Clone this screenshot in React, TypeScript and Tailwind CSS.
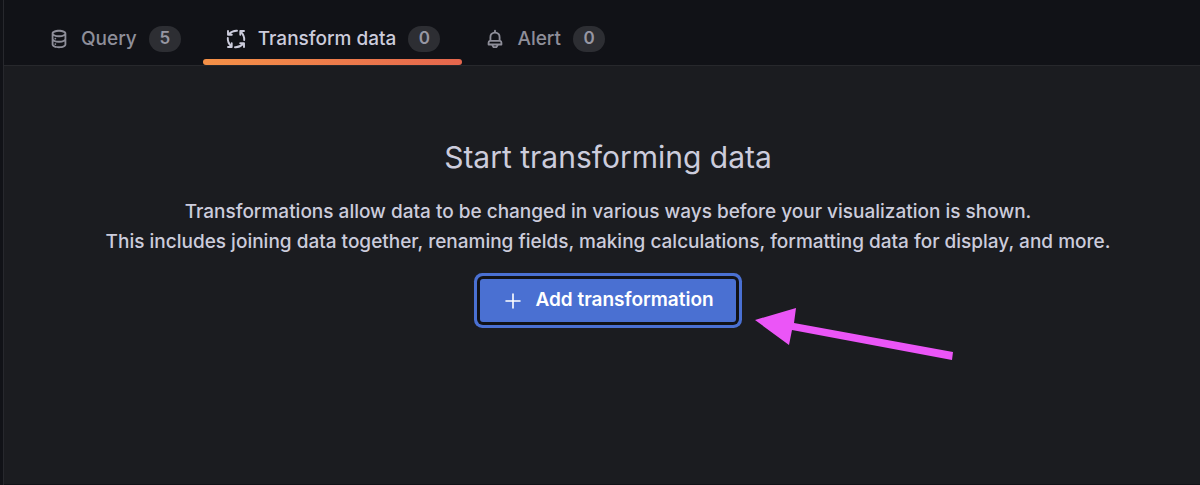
import type { ReactNode } from "react";

function DatabaseIcon() {
  return (
    <svg className="size-[22px] shrink-0" viewBox="0 0 24 24" fill="currentColor" aria-hidden="true">
      <path d="M8,16.5a1,1,0,1,0,1,1A1,1,0,0,0,8,16.5ZM12,2C8,2,4,3.37,4,6V18c0,2.63,4,4,8,4s8-1.37,8-4V6C20,3.37,16,2,12,2Zm6,16c0,.71-2.28,2-6,2s-6-1.29-6-2V14.73A13.16,13.16,0,0,0,12,16a13.16,13.16,0,0,0,6-1.27Zm0-6c0,.71-2.28,2-6,2s-6-1.29-6-2V8.73A13.16,13.16,0,0,0,12,10a13.16,13.16,0,0,0,6-1.27ZM12,8C8.28,8,6,6.71,6,6s2.28-2,6-2,6,1.29,6,2S15.72,8,12,8ZM8,10.5a1,1,0,1,0,1,1A1,1,0,0,0,8,10.5Z" />
    </svg>
  );
}

function ProcessIcon() {
  return (
    <svg
      className="size-[22px] shrink-0"
      viewBox="0 0 22 22"
      fill="none"
      stroke="currentColor"
      strokeWidth="1.9"
      strokeLinecap="round"
      strokeLinejoin="round"
      aria-hidden="true"
    >
      <path d="M12 2.8C9 2.6 6.4 3.6 4 6" />
      <path d="M3 3V6.7H6.8" />
      <path d="M19.2 12C19.4 9 18.4 6.4 16 4" />
      <path d="M19 3H15.3V6.8" />
      <path d="M10 19.2C13 19.4 15.6 18.4 18 16" />
      <path d="M19 19V15.3H15.2" />
      <path d="M2.8 10C2.6 13 3.6 15.6 6 18" />
      <path d="M3 19H6.7V15.2" />
    </svg>
  );
}

function BellIcon() {
  return (
    <svg className="size-[22px] shrink-0" viewBox="0 0 24 24" fill="currentColor" aria-hidden="true">
      <path d="M18,13.18V10a6,6,0,0,0-5-5.91V3a1,1,0,0,0-2,0V4.09A6,6,0,0,0,6,10v3.18A3,3,0,0,0,4,16v2a1,1,0,0,0,1,1H8.14a4,4,0,0,0,7.72,0H19a1,1,0,0,0,1-1V16A3,3,0,0,0,18,13.18ZM8,10a4,4,0,0,1,8,0v3H8Zm4,10a2,2,0,0,1-1.72-1h3.44A2,2,0,0,1,12,20Zm6-3H6V16a1,1,0,0,1,1-1H17a1,1,0,0,1,1,1Z" />
    </svg>
  );
}

function Tab({ icon, label, count, active = false }: { icon: ReactNode; label: string; count: number; active?: boolean }) {
  return (
    <button
      type="button"
      role="tab"
      aria-selected={active}
      className={
        active
          ? "flex flex-col justify-end text-[#ccccdc]"
          : "flex flex-col justify-end text-[#8e8e99]"
      }
    >
      <span className="flex items-center px-[22px] pb-[7px]">
        {icon}
        <span className="ml-[11px] text-[19px] leading-[26px] font-medium whitespace-nowrap">{label}</span>
        <span className="ml-3 flex h-[26px] w-8 items-center justify-center rounded-full bg-[#2d2e33] text-[17px] font-semibold text-[#9797a3]">
          {count}
        </span>
      </span>
      <span
        className={
          active
            ? "h-1.5 w-full rounded-[3px] bg-linear-to-r from-[#f59147] to-[#e5664d]"
            : "h-1.5 w-full"
        }
      />
    </button>
  );
}

export default function App() {
  return (
    <div className="flex min-h-screen bg-[#111217] pl-[3px] font-['Inter',sans-serif]">
      <div className="flex flex-1 flex-col border-l border-[#27282d]">
        <header role="tablist" className="flex h-[66px] border-b border-[#27282c] pl-[22px]">
          <Tab icon={<DatabaseIcon />} label="Query" count={5} />
          <Tab icon={<ProcessIcon />} label="Transform data" count={0} active />
          <Tab icon={<BellIcon />} label="Alert" count={0} />
        </header>
        <main className="mb-px flex flex-1 flex-col items-center bg-[#1b1c20] pt-[71px] pl-3 text-center text-[#ccccdc]">
          <h1 className="text-[30px] leading-10 font-normal">Start transforming data</h1>
          <p className="mt-5 text-[19px] leading-[30px] font-medium">
            Transformations allow data to be changed in various ways before your visualization is shown.
            <br />
            This includes joining data together, renaming fields, making calculations, formatting data for display, and more.
          </p>
          <div className="relative mt-[22px]">
            <button
              type="button"
              className="flex h-[43px] items-center rounded-[3px] bg-[#4a70d2] px-[22px] text-[19px] font-semibold text-white ring-3 ring-[#4a70d2] ring-offset-3 ring-offset-[#111217]"
            >
              <svg className="size-[22px]" viewBox="0 0 22 22" stroke="currentColor" strokeWidth="1.6" strokeLinecap="round" aria-hidden="true">
                <path d="M11 4V18M4 11H18" />
              </svg>
              <span className="ml-[11px] whitespace-nowrap">Add transformation</span>
            </button>
            <svg className="absolute top-7 left-full ml-[19px] h-[54px] w-[200px]" viewBox="0 0 200 54" fill="#eb55f7" aria-hidden="true">
              <path d="M0 13L41 1L39 16L198 45L197 53L37 23L34 38Z" />
            </svg>
          </div>
        </main>
      </div>
    </div>
  );
}
